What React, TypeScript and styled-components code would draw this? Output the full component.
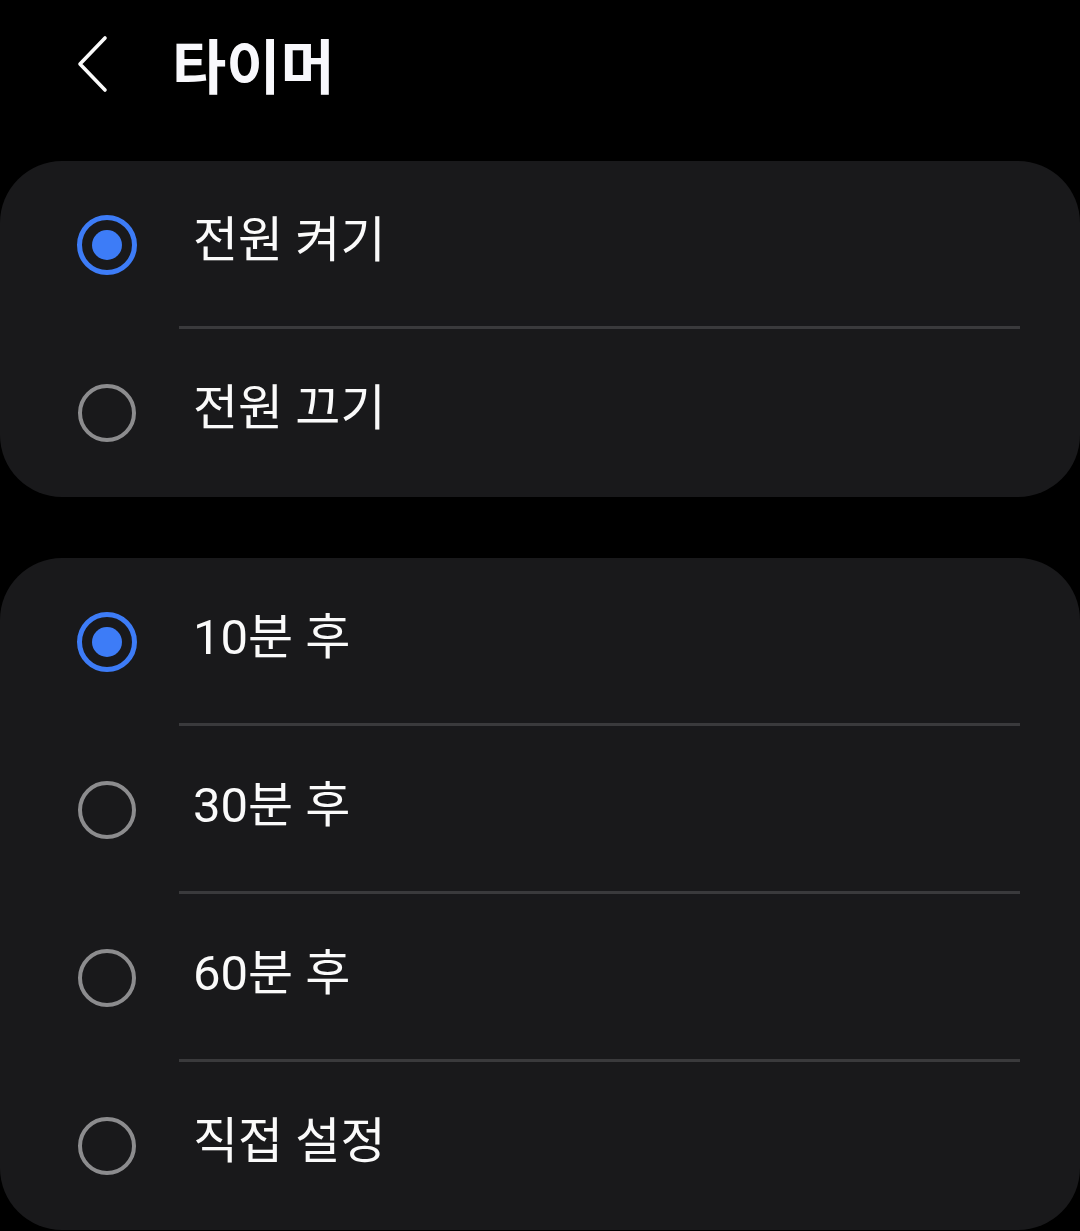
import React, { useState } from 'react'
import styled, { createGlobalStyle } from 'styled-components'

const GlobalStyle = createGlobalStyle`
  html, body {
    margin: 0;
    padding: 0;
    background: #000;
  }
  body {
    font-family: Roboto, "Noto Sans CJK KR", sans-serif;
    color: #fafafa;
  }
`

type Group = { id: string; options: string[] }

const groups: Group[] = [
  { id: 'power', options: ['전원 켜기', '전원 끄기'] },
  { id: 'time', options: ['10분 후', '30분 후', '60분 후', '직접 설정'] },
]

const App = () => {
  const [selected, setSelected] = useState<Record<string, number>>({ power: 0, time: 0 })

  return (
    <Page>
      <GlobalStyle />
      <Header>
        <BackButton aria-label="뒤로">
          <svg width="36" height="60" viewBox="0 0 36 60" fill="none">
            <path d="M30 4 L5 30 L30 56" stroke="#fafafa" strokeWidth="3.6" strokeLinecap="round" strokeLinejoin="round" />
          </svg>
        </BackButton>
        <Title>타이머</Title>
      </Header>
      <Cards>
        {groups.map((g) => (
          <Card key={g.id}>
            {g.options.map((label, i) => (
              <Row key={label} onClick={() => setSelected({ ...selected, [g.id]: i })}>
                <RadioSlot>
                  <Radio $checked={selected[g.id] === i} />
                </RadioSlot>
                <Label $last={i === g.options.length - 1}>{label}</Label>
              </Row>
            ))}
          </Card>
        ))}
      </Cards>
    </Page>
  )
}

export default App

const Page = styled.div`
  width: 1080px;
  min-height: 1231px;
  background: #000;
`

const Header = styled.div`
  height: 126px;
  display: flex;
  align-items: center;
  padding-left: 75px;
  box-sizing: border-box;
`

const BackButton = styled.button`
  background: none;
  border: none;
  padding: 0;
  width: 36px;
  height: 60px;
  display: flex;
  align-items: center;
  margin-top: 2px;
  cursor: pointer;
`

const Title = styled.h1`
  margin: 0 0 0 61px;
  font-family: "Noto Sans CJK KR", sans-serif;
  font-size: 59px;
  font-weight: 700;
  color: #f8f8fc;
  letter-spacing: 0;
`

const Cards = styled.div`
  margin-top: 35px;
  display: flex;
  flex-direction: column;
  gap: 61px;
`

const Card = styled.div`
  background: #19191b;
  border-radius: 62px;
  overflow: hidden;
`

const Row = styled.div`
  height: 168px;
  display: flex;
  align-items: center;
  cursor: pointer;
`

const RadioSlot = styled.div`
  flex: none;
  width: 60px;
  height: 60px;
  margin: 0 55px 0 77px;
  display: flex;
  align-items: center;
  justify-content: center;
`

const Radio = styled.span<{ $checked: boolean }>`
  width: ${(p) => (p.$checked ? '60px' : '58px')};
  height: ${(p) => (p.$checked ? '60px' : '58px')};
  box-sizing: border-box;
  border-radius: 50%;
  border: ${(p) => (p.$checked ? '5px solid #3d7cf7' : '4px solid #8c8c8e')};
  display: flex;
  align-items: center;
  justify-content: center;
  &::after {
    content: '';
    width: 30px;
    height: 30px;
    border-radius: 50%;
    background: #3d7cf7;
    display: ${(p) => (p.$checked ? 'block' : 'none')};
  }
`

const Label = styled.div<{ $last: boolean }>`
  flex: 1;
  align-self: stretch;
  margin-right: 60px;
  margin-left: -13px;
  padding-left: 14px;
  display: flex;
  align-items: center;
  padding-bottom: 20px;
  font-size: 49px;
  font-weight: 400;
  color: #fafafa;
  box-shadow: ${(p) => (p.$last ? 'none' : 'inset 0 -3px 0 #3a3a3c')};
`
